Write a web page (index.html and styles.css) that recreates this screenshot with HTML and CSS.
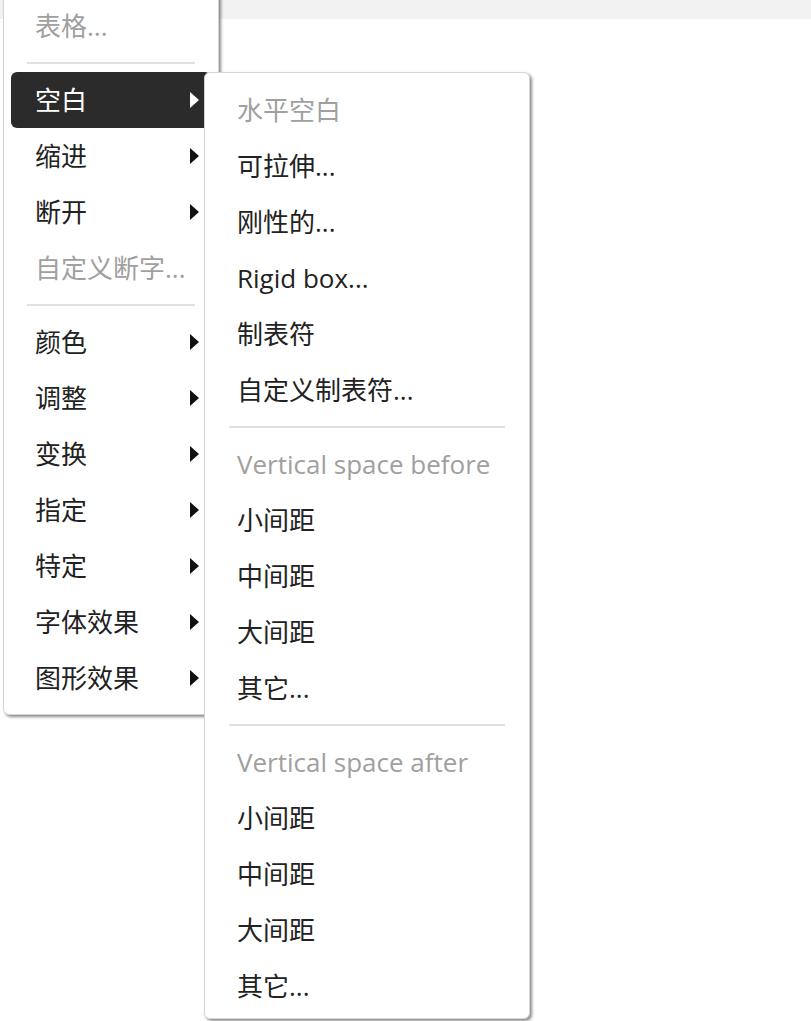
FILE: index.html
```html
<!DOCTYPE html>
<html lang="zh">
<head>
<meta charset="utf-8">
<title>Menu</title>
<link rel="stylesheet" href="styles.css">
</head>
<body>
<div class="page">
  <div class="topbar"></div>
  <div class="menu main-menu">
    <div class="item disabled"><span class="label">表格...</span></div>
    <div class="sep"></div>
    <div class="item active"><span class="label">空白</span><span class="arrow"></span></div>
    <div class="item"><span class="label">缩进</span><span class="arrow"></span></div>
    <div class="item"><span class="label">断开</span><span class="arrow"></span></div>
    <div class="item disabled"><span class="label">自定义断字...</span></div>
    <div class="sep"></div>
    <div class="item"><span class="label">颜色</span><span class="arrow"></span></div>
    <div class="item"><span class="label">调整</span><span class="arrow"></span></div>
    <div class="item"><span class="label">变换</span><span class="arrow"></span></div>
    <div class="item"><span class="label">指定</span><span class="arrow"></span></div>
    <div class="item"><span class="label">特定</span><span class="arrow"></span></div>
    <div class="item"><span class="label">字体效果</span><span class="arrow"></span></div>
    <div class="item"><span class="label">图形效果</span><span class="arrow"></span></div>
  </div>
  <div class="menu sub-menu">
    <div class="item disabled"><span class="label">水平空白</span></div>
    <div class="item"><span class="label">可拉伸...</span></div>
    <div class="item"><span class="label">刚性的...</span></div>
    <div class="item"><span class="label">Rigid box...</span></div>
    <div class="item"><span class="label">制表符</span></div>
    <div class="item"><span class="label">自定义制表符...</span></div>
    <div class="sep"></div>
    <div class="item disabled"><span class="label">Vertical space before</span></div>
    <div class="item"><span class="label">小间距</span></div>
    <div class="item"><span class="label">中间距</span></div>
    <div class="item"><span class="label">大间距</span></div>
    <div class="item"><span class="label">其它...</span></div>
    <div class="sep"></div>
    <div class="item disabled"><span class="label">Vertical space after</span></div>
    <div class="item"><span class="label">小间距</span></div>
    <div class="item"><span class="label">中间距</span></div>
    <div class="item"><span class="label">大间距</span></div>
    <div class="item"><span class="label">其它...</span></div>
  </div>
</div>
</body>
</html>
```
FILE: styles.css
```css
html, body {
  margin: 0;
  padding: 0;
  background: #ffffff;
}
body {
  font-family: "Open Sans", "Noto Sans CJK SC", sans-serif;
  font-size: 26px;
  color: #222222;
}
.page {
  position: relative;
  width: 811px;
  height: 1021px;
  overflow: hidden;
}
.topbar {
  height: 19px;
  background: #f2f2f2;
}
.menu {
  position: absolute;
  box-sizing: border-box;
  background: #ffffff;
  border: 1px solid #d4d4d4;
  border-radius: 6px;
  box-shadow: 2px 2px 3px rgba(0, 0, 0, 0.45);
  display: flex;
  flex-direction: column;
}
.main-menu {
  left: 3px;
  top: -13px;
  width: 216px;
  padding: 10px 7px 8px 7px;
}
.sub-menu {
  left: 204px;
  top: 72px;
  width: 326px;
  padding: 9px 8px 4px 8px;
}
.item {
  height: 56px;
  flex: none;
  display: flex;
  align-items: center;
  justify-content: space-between;
  padding: 0 12px 0 24px;
  border-radius: 6px;
  white-space: nowrap;
}
.item .label {
  line-height: 1;
}
.item.disabled {
  color: #a0a0a0;
}
.item.active {
  background: #2b2b2b;
  color: #ffffff;
}
.arrow {
  width: 0;
  height: 0;
  border-top: 8px solid transparent;
  border-bottom: 8px solid transparent;
  border-left: 9px solid #111111;
}
.item.active .arrow {
  border-left-color: #ffffff;
}
.sep {
  height: 18px;
  flex: none;
  display: flex;
  align-items: center;
  padding: 0 16px;
}
.sep::before {
  content: "";
  flex: 1;
  height: 2px;
  background: #e0e0e0;
}
```
